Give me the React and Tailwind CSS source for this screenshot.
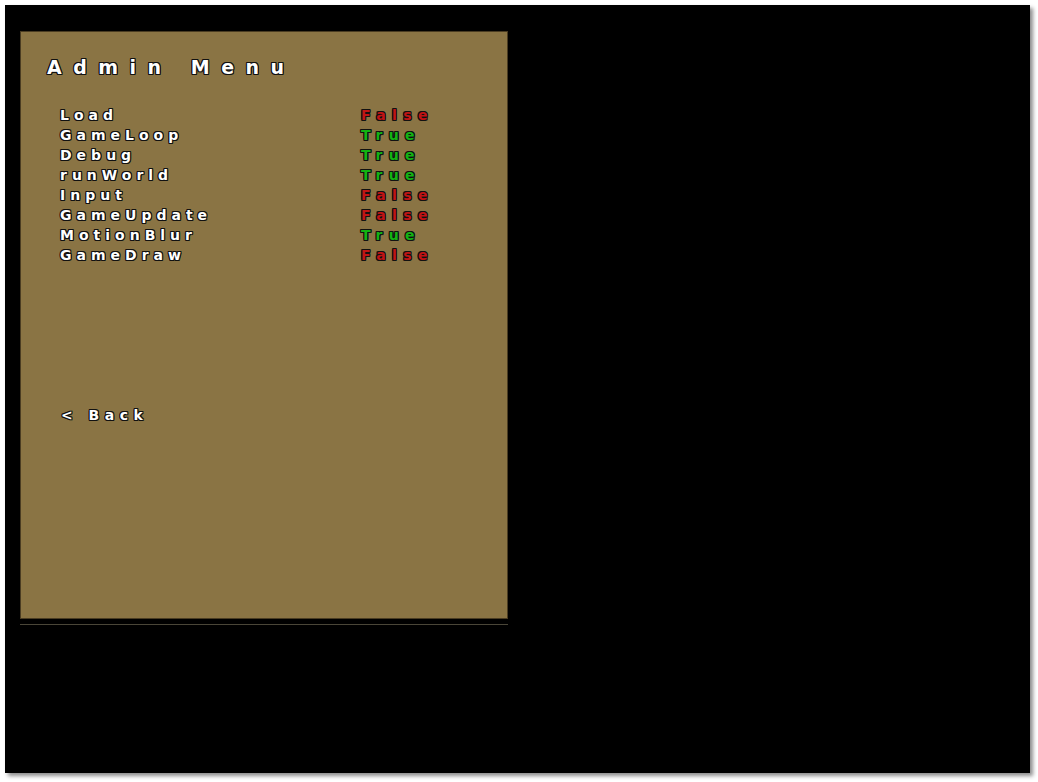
const outline =
    "[text-shadow:-1px_-1px_0_#111,1px_-1px_0_#111,-1px_1px_0_#111,1px_1px_0_#111,0_1px_0_#111,0_-1px_0_#111,1px_0_0_#111,-1px_0_0_#111]";

const flags = [
    { name: "Load", value: false },
    { name: "GameLoop", value: true },
    { name: "Debug", value: true },
    { name: "runWorld", value: true },
    { name: "Input", value: false },
    { name: "GameUpdate", value: false },
    { name: "MotionBlur", value: true },
    { name: "GameDraw", value: false },
];

export default function App() {
    return (
        <div className="w-[1038px] h-[782px] bg-white pl-[5px] pt-[5px] font-['DejaVu_Sans',sans-serif]">
            <div className="w-[1025px] h-[768px] bg-black pl-[15px] pt-[26px] shadow-[3px_3px_4px_rgba(0,0,0,0.45)]">
                {/* 패널 */}
                <div className="w-[488px] h-[588px] bg-[#8a7444] border border-[#4a3c22] flex flex-col">
                    {/* 제목 */}
                    <h1
                        className={`pl-[26px] pt-[23px] text-[19px] font-bold leading-6 tracking-[11.5px] text-white ${outline}`}
                    >
                        Admin Menu
                    </h1>

                    {/* 항목 목록 */}
                    <div className="mt-[26px] pl-[39px] flex flex-col">
                        {flags.map((f) => (
                            <div key={f.name} className="h-5 flex items-center">
                                <span
                                    className={`w-[301px] text-[14px] font-bold tracking-[5px] text-white ${outline}`}
                                >
                                    {f.name}
                                </span>
                                <span
                                    className={`text-[14px] font-bold tracking-[6.4px] ${outline} ${
                                        f.value ? "text-[#13b313]" : "text-[#c01414]"
                                    }`}
                                >
                                    {f.value ? "True" : "False"}
                                </span>
                            </div>
                        ))}
                    </div>

                    {/* 뒤로 */}
                    <div
                        className={`mt-[140px] pl-[40px] h-5 flex items-center text-[14px] font-bold tracking-[5.5px] text-white ${outline}`}
                    >
                        &lt; Back
                    </div>
                </div>
                <div className="mt-[5px] w-[488px] h-px bg-[#4a4638]" />
            </div>
        </div>
    );
}
